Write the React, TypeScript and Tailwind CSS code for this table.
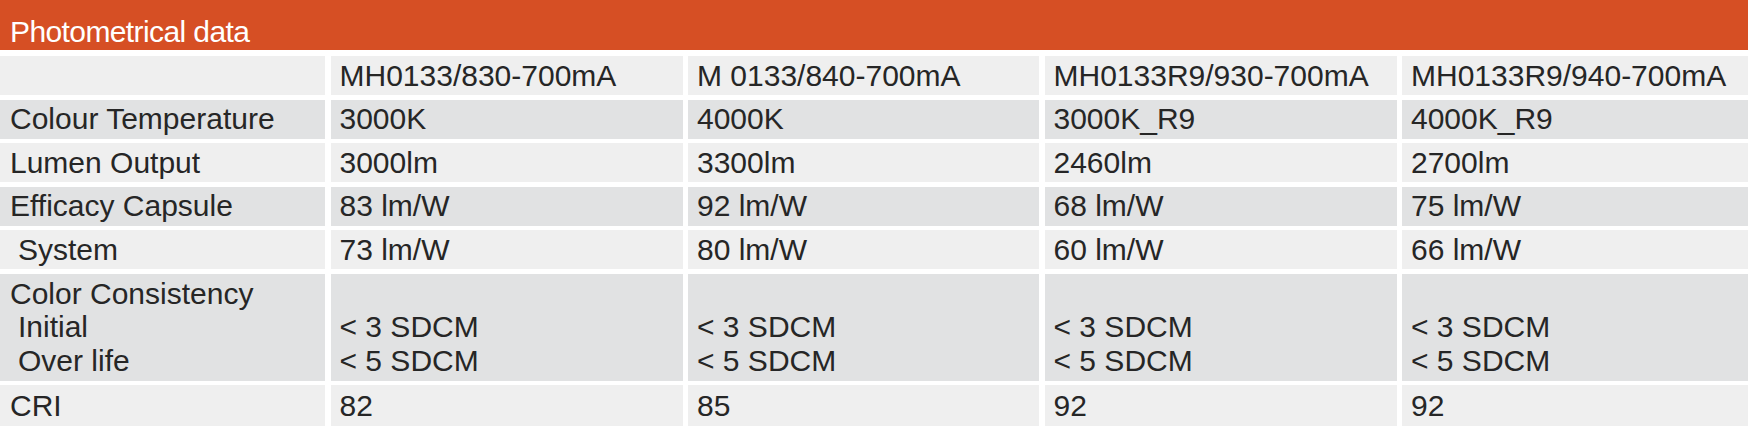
type Row = {
  label: React.ReactNode;
  values: React.ReactNode[];
  tone: "light" | "dark";
  height: string;
};

const rows: Row[] = [
  {
    label: "",
    values: ["MH0133/830-700mA", "M 0133/840-700mA", "MH0133R9/930-700mA", "MH0133R9/940-700mA"],
    tone: "light",
    height: "h-[39px]",
  },
  {
    label: "Colour Temperature",
    values: ["3000K", "4000K", "3000K_R9", "4000K_R9"],
    tone: "dark",
    height: "h-[39px]",
  },
  {
    label: "Lumen Output",
    values: ["3000lm", "3300lm", "2460lm", "2700lm"],
    tone: "light",
    height: "h-[39px]",
  },
  {
    label: "Efficacy Capsule",
    values: ["83 lm/W", "92 lm/W", "68 lm/W", "75 lm/W"],
    tone: "dark",
    height: "h-[39px]",
  },
  {
    label: <span className="pl-[8px]">System</span>,
    values: ["73 lm/W", "80 lm/W", "60 lm/W", "66 lm/W"],
    tone: "light",
    height: "h-[39px]",
  },
];

const sdcm = (
  <div className="flex flex-col pt-[3px] leading-[33.5px]">
    <span>&nbsp;</span>
    <span>&lt; 3 SDCM</span>
    <span>&lt; 5 SDCM</span>
  </div>
);

function Cell({ children, tone, height, first }: { children?: React.ReactNode; tone: "light" | "dark"; height: string; first?: boolean }) {
  return (
    <div
      className={`${height} flex items-center whitespace-nowrap ${first ? "pl-[10px]" : "pl-[9px]"} ${
        tone === "light" ? "bg-[#efefef]" : "bg-[#e1e2e3]"
      }`}
    >
      {children}
    </div>
  );
}

export default function App() {
  return (
    <div
      className="w-[1748px] h-[442px] bg-white text-[#262626] text-[30px] leading-[33.5px]"
      style={{ fontFamily: '"Liberation Sans", Arial, sans-serif' }}
    >
      <div className="h-[50px] bg-[#d64f24] pl-[10px] pt-[17px]">
        <h2 className="text-white text-[30px] leading-[30px] tracking-[-0.6px] font-normal">Photometrical data</h2>
      </div>

      <div className="mt-[6px] grid grid-cols-[325px_352px_351px_352px_1fr] gap-x-[5.5px] gap-y-[4.5px]">
        {rows.map((r, i) => (
          <div key={i} className="contents">
            <Cell tone={r.tone} height={r.height} first>
              {r.label}
            </Cell>
            {r.values.map((v, j) => (
              <Cell key={j} tone={r.tone} height={r.height}>
                {v}
              </Cell>
            ))}
          </div>
        ))}

        {/* colour consistency spans three text lines */}
        <div className="h-[107px] bg-[#e1e2e3] pl-[10px] whitespace-nowrap">
          <div className="flex flex-col pt-[3px] leading-[33.5px]">
            <span>Color Consistency</span>
            <span className="pl-[8px]">Initial</span>
            <span className="pl-[8px]">Over life</span>
          </div>
        </div>
        {[0, 1, 2, 3].map((j) => (
          <div key={j} className="h-[107px] bg-[#e1e2e3] pl-[9px] whitespace-nowrap">
            {sdcm}
          </div>
        ))}

        <Cell tone="light" height="h-[41px]" first>
          CRI
        </Cell>
        {["82", "85", "92", "92"].map((v, j) => (
          <Cell key={j} tone="light" height="h-[41px]">
            {v}
          </Cell>
        ))}
      </div>
    </div>
  );
}
